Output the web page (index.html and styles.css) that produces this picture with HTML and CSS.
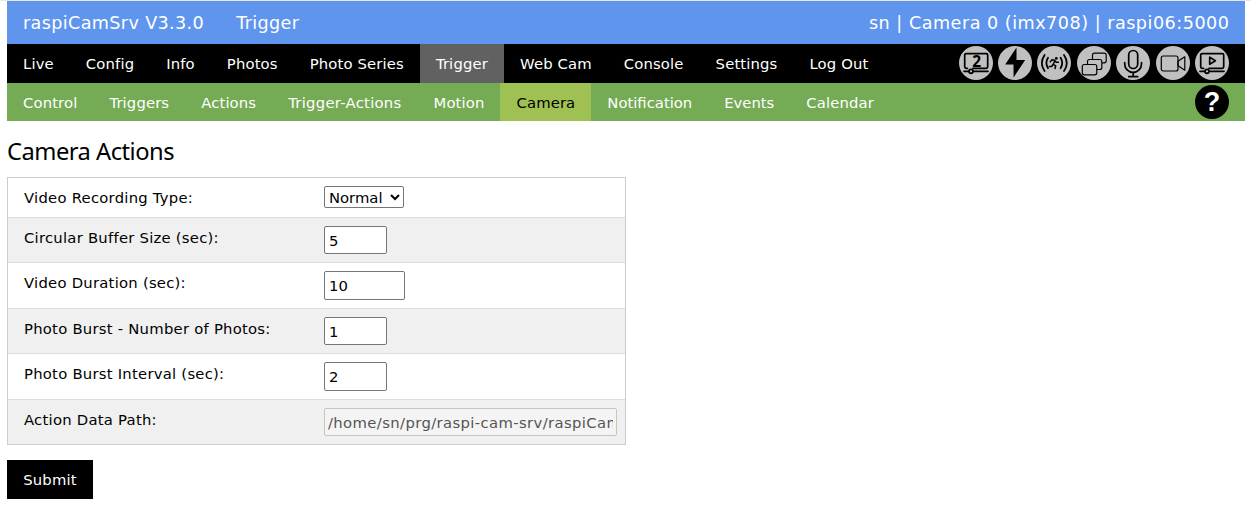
FILE: index.html
```html
<!DOCTYPE html>
<html lang="en">
<head>
<meta charset="utf-8">
<title>raspiCamSrv</title>
<link rel="stylesheet" href="styles.css">
</head>
<body>
<header class="title-bar">
  <span class="brand">raspiCamSrv V3.3.0</span>
  <span class="section">Trigger</span>
  <span class="host">sn | Camera 0 (imx708) | raspi06:5000</span>
</header>
<nav class="bar main-nav">
  <a class="tab">Live</a><a class="tab">Config</a><a class="tab">Info</a><a class="tab">Photos</a><a class="tab">Photo Series</a><a class="tab active">Trigger</a><a class="tab">Web Cam</a><a class="tab">Console</a><a class="tab">Settings</a><a class="tab">Log Out</a>
  <div class="status">
    <svg class="icon" viewBox="0 0 34 34"><circle class="disc" cx="17" cy="17" r="17"/><g class="line"><path d="M8.500 22.300H7.200q-1.500 0-1.500-1.500V9.100q0-1.500 1.500-1.500h20q1.500 0 1.500 1.500v11.700q0 1.500-1.500 1.500H14"/><path d="M5 25.300h5M14.500 25.300H29"/><circle cx="12" cy="25.300" r="2"/></g><text class="digit" x="17.800" y="20.800">2</text></svg>
    <svg class="icon" viewBox="0 0 34 34"><circle class="disc" cx="17" cy="17" r="17"/><path d="M18.500 1.500 7.200 18.600h8.300L15.600 31.500 27.200 13.900h-8.700z"/></svg>
    <svg class="icon" viewBox="0 0 34 34"><circle class="disc" cx="17" cy="17" r="17"/><g class="line"><path stroke-width="1.800" d="M7.600 8.900q-5.600 8.200 0 16.200M11 11.800q-3.200 5.200 0 10.400M27 8.900q5.600 8.200 0 16.200M23.600 11.800q3.200 5.200 0 10.400"/><path stroke-width="1.500" d="M13.300 15.800l1.700-2 2.600.5 1.600 2 2.200-.1M17.800 14.800l-1.600 3.500 2.500 1.600-.6 2.600M16 18.500l-1.300 2h-2.400"/></g><circle cx="19.300" cy="12.400" r="1.400"/></svg>
    <svg class="icon" viewBox="0 0 34 34"><circle class="disc" cx="17" cy="17" r="17"/><g class="line thin"><path d="M15.500 13.500V9.200q0-2 2-2h9.700q2 0 2 2v5.600q0 2-2 2h-2.400M10.500 18.500v-3q0-2 2-2h10.300q2 0 2 2v6q0 2-2 2h-3"/><rect x="5.300" y="18.500" width="14.500" height="10.300" rx="2"/></g></svg>
    <svg class="icon" viewBox="0 0 34 34"><circle class="disc" cx="17" cy="17" r="17"/><g class="line"><rect x="12.700" y="4.500" width="9" height="18" rx="4.500"/><path d="M8.700 16.500v1.500a8.400 8.400 0 0 0 16.800 0v-1.500M17.200 26.500V30.500M12.700 30.700h9"/></g></svg>
    <svg class="icon" viewBox="0 0 34 34"><circle class="disc" cx="17" cy="17" r="17"/><g class="line thin"><rect x="5.300" y="10" width="16.700" height="15" rx="2"/><path d="M22 15.200l6.800-4.400v13.400L22 19.800z"/></g></svg>
    <svg class="icon" viewBox="0 0 34 34"><circle class="disc" cx="17" cy="17" r="17"/><g class="line"><path d="M8.500 22.300H7.200q-1.500 0-1.500-1.500V9.100q0-1.500 1.500-1.500h20q1.500 0 1.500 1.500v11.700q0 1.500-1.500 1.500H14"/><path d="M14.700 11.200v7l5.700-3.500z"/><path d="M5 25.300h5M14.500 25.300H29"/><circle cx="12" cy="25.300" r="2"/></g></svg>
  </div>
</nav>
<nav class="bar sub-nav">
  <a class="tab">Control</a><a class="tab">Triggers</a><a class="tab">Actions</a><a class="tab wide">Trigger-Actions</a><a class="tab">Motion</a><a class="tab active">Camera</a><a class="tab tight">Notification</a><a class="tab tight">Events</a><a class="tab">Calendar</a>
  <span class="help">?</span>
</nav>
<main>
  <h1>Camera Actions</h1>
  <form>
    <div class="settings">
      <div class="row first"><label>Video Recording Type:</label><select><option>Normal</option></select></div>
      <div class="row"><label>Circular Buffer Size (sec):</label><input class="short" value="5"></div>
      <div class="row tall"><label>Video Duration (sec):</label><input class="medium" value="10"></div>
      <div class="row"><label>Photo Burst - Number of Photos:</label><input class="short" value="1"></div>
      <div class="row tall"><label>Photo Burst Interval (sec):</label><input class="short" value="2"></div>
      <div class="row"><label>Action Data Path:</label><input class="path" value="/home/sn/prg/raspi-cam-srv/raspiCamSrv" disabled></div>
    </div>
    <button class="submit" type="button">Submit</button>
  </form>
</main>
</body>
</html>
```
FILE: styles.css
```css
* { box-sizing: border-box; }
body {
  margin: 0;
  padding: 0 6px 0 7px;
  border-top: 1px solid #e8e8e8;
  background: #fff;
  color: #000;
  font: 14.8px/22px Verdana, "DejaVu Sans", sans-serif;
}
.title-bar {
  display: flex;
  align-items: center;
  height: 43px;
  padding: 0 16px;
  background: #6095ee;
  color: #fff;
  font-size: 17.6px;
  letter-spacing: .36px;
}
.section { margin-left: 32px; }
.host { margin-left: auto; letter-spacing: .5px; margin-right: -.5px; }
.bar { display: flex; color: #fff; }
.tab { padding: 0 16px; white-space: nowrap; }
.main-nav { height: 39px; line-height: 39px; background: #000; letter-spacing: .15px; }
.main-nav .active { background: #616161; }
.sub-nav { height: 38px; line-height: 39px; background: #75ab55; letter-spacing: .13px; }
.sub-nav .active { background: #9fc154; color: #000; }
.wide { letter-spacing: .28px; }
.tight { letter-spacing: 0; }
.status { display: flex; align-items: center; gap: 5.4px; margin-left: auto; padding: 0 16px 1px 0; }
.icon { width: 34px; height: 34px; }
.disc { fill: #c0c0c0; }
.line { fill: none; stroke: #000; stroke-width: 1.7; stroke-linecap: round; stroke-linejoin: round; }
.thin { stroke-width: 1.2; }
.digit { font: bold 15.500px "Open Sans", sans-serif; text-anchor: middle; letter-spacing: 0; }
.help {
  width: 34px;
  height: 34px;
  margin: 2px 16px 0 auto;
  border-radius: 50%;
  background: #000;
  font: bold 27px/35px "Liberation Sans", Arial, sans-serif;
  text-align: center;
}
h1 { margin: 12px 0 8px; font: 23.7px/36px "Noto Sans", sans-serif; letter-spacing: -.5px; }
.settings { width: 619px; border: 1px solid #ccc; }
.row {
  display: flex;
  align-items: flex-start;
  height: 45px;
  padding: 8px;
  border-top: 1px solid #ddd;
}
.row:nth-child(even) { background: #f0f0f0; }
.row.first { height: 39px; border-top: 0; }
.row.tall { height: 46px; }
label { width: 308px; padding: 1px 0 0 8px; letter-spacing: .25px; }
input, select { margin: 0; border: 1px solid #767676; border-radius: 2px; background: #fff; color: #000; font: inherit; }
input { height: 28px; padding: 0 4px; }
.tall input { height: 29px; }
select { width: 80px; height: 22px; padding: 0; line-height: 20px; }
.short { width: 63px; }
.medium { width: 81px; }
.path { width: 293px; padding: 0 3px; border-color: #c5c5c5; background: #f4f4f4; color: #545454; letter-spacing: .38px; }
.submit { width: 86px; height: 39px; margin-top: 15px; padding: 0; border: 0; background: #000; color: #fff; font: inherit; letter-spacing: .2px; }
```
